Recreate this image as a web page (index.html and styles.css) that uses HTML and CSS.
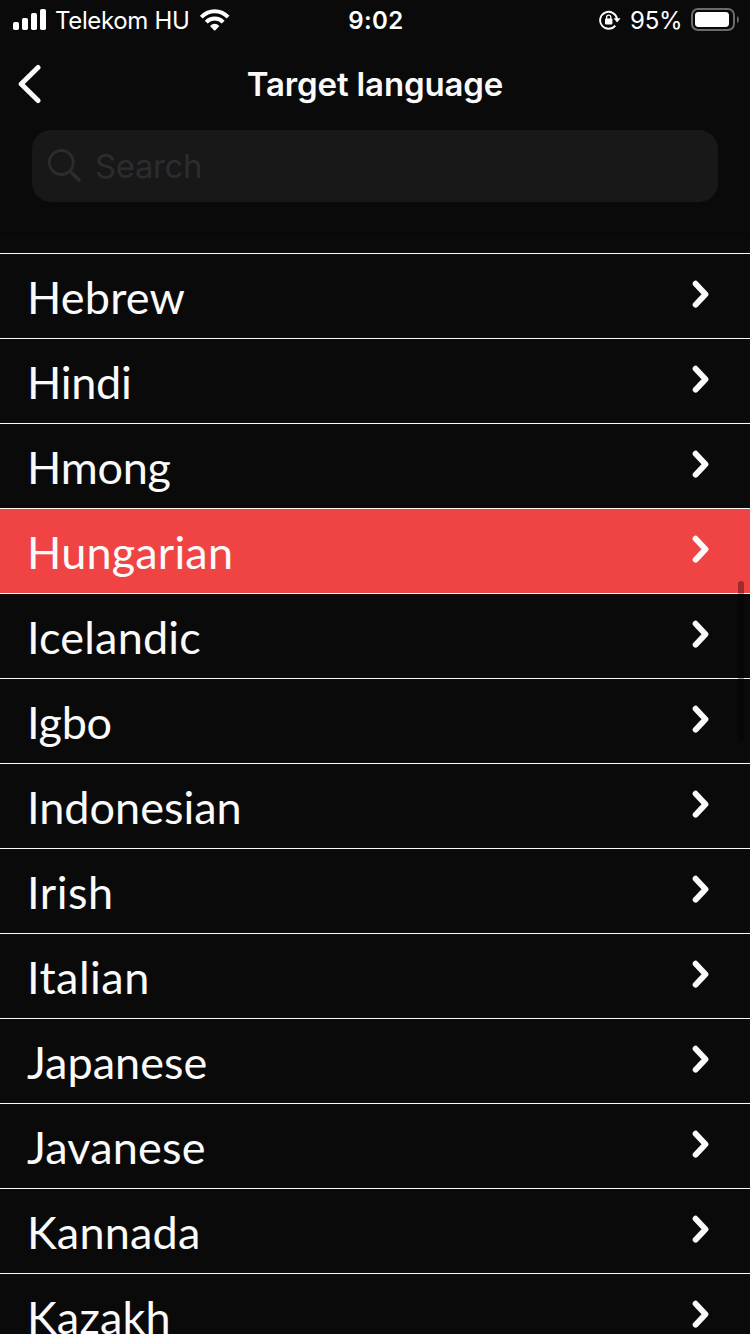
FILE: index.html
```html
<!DOCTYPE html>
<html lang="en">
<head>
<meta charset="utf-8">
<title>Target language</title>
<link rel="stylesheet" href="styles.css">
</head>
<body>
<svg class="defs" width="0" height="0"><symbol id="chevron" viewBox="0 0 20 30"><path d="M4.6 3.7 L14.5 14.2 L4.6 24.7" fill="none" stroke="#fafafa" stroke-width="5.8" stroke-linecap="round" stroke-linejoin="round"/></symbol></svg>
<header class="header">
  <div class="status">
    <div class="status-left">
      <svg class="signal" width="34" height="22" viewBox="0 0 34 22" fill="#fff"><rect x="0" y="13" width="6" height="8" rx="1.7"/><rect x="9" y="9" width="6" height="12" rx="1.7"/><rect x="18" y="4" width="6" height="17" rx="1.7"/><rect x="27" y="0" width="6" height="21" rx="1.7"/></svg>
      <span class="carrier">Telekom HU</span>
      <svg class="wifi" width="30" height="22" viewBox="0 0 30 22"><g fill="none" stroke="#fff" stroke-width="4"><path d="M1.3 8.2 Q7.2 2.3 14.7 2.3 T28.1 8.2"/><path d="M6.2 13.2 Q9.8 9.6 14.7 9.6 T23.2 13.2"/></g><path d="M10 17 Q14.7 12.7 19.4 17 L15.4 21.2 Q14.7 21.8 14 21.2 Z" fill="#fff"/></svg>
    </div>
    <span class="clock">9:02</span>
    <div class="status-right">
      <svg class="lock" width="22" height="20" viewBox="0 0 22 20"><path d="M16.3 15.6 A8.5 8.5 0 1 1 18 8.8" fill="none" stroke="#fff" stroke-width="1.9"/><path d="M14.6 8.2 H21.6 L18.1 12.6 Z" fill="#fff"/><rect x="6" y="8.5" width="7.4" height="6" rx="1" fill="#fff"/><path d="M7.6 9 V7.2 a2.1 2.1 0 0 1 4.2 0 V9" fill="none" stroke="#fff" stroke-width="1.3"/></svg>
      <span class="percent">95%</span>
      <svg class="battery" width="48" height="23" viewBox="0 0 48 23"><rect x="1" y="1" width="42" height="21" rx="6" fill="none" stroke="#6b6b6b" stroke-width="2"/><rect x="4" y="4" width="34" height="15" rx="3.4" fill="#fff"/><path d="M46 8 Q48 9 48 11.5 T46 15 Z" fill="#6b6b6b"/></svg>
    </div>
  </div>
  <div class="nav">
    <svg class="back" width="26" height="40" viewBox="0 0 26 40"><path d="M21 3.5 L4.2 20 L21 36.5" fill="none" stroke="#fafafa" stroke-width="5" stroke-linecap="round" stroke-linejoin="round"/></svg>
    <h1 class="title">Target language</h1>
  </div>
  <div class="search">
    <svg class="glass" width="34" height="34" viewBox="0 0 34 34" fill="none" stroke="#2c2c30" stroke-linecap="round"><circle cx="13.3" cy="13.5" r="12" stroke-width="2.8"/><path d="M22.5 22.7 L31 31" stroke-width="3.6"/></svg>
    <span class="placeholder">Search</span>
  </div>
</header>
<main class="list">
  <div class="row"><span>Hebrew</span><svg class="chevron"><use href="#chevron"/></svg></div>
  <div class="row tight"><span>Hindi</span><svg class="chevron"><use href="#chevron"/></svg></div>
  <div class="row tight"><span>Hmong</span><svg class="chevron"><use href="#chevron"/></svg></div>
  <div class="row selected"><span>Hungarian</span><svg class="chevron"><use href="#chevron"/></svg></div>
  <div class="row"><span>Icelandic</span><svg class="chevron"><use href="#chevron"/></svg></div>
  <div class="row tight"><span>Igbo</span><svg class="chevron"><use href="#chevron"/></svg></div>
  <div class="row even"><span>Indonesian</span><svg class="chevron"><use href="#chevron"/></svg></div>
  <div class="row loose"><span>Irish</span><svg class="chevron"><use href="#chevron"/></svg></div>
  <div class="row loose"><span>Italian</span><svg class="chevron"><use href="#chevron"/></svg></div>
  <div class="row even"><span>Japanese</span><svg class="chevron"><use href="#chevron"/></svg></div>
  <div class="row"><span>Javanese</span><svg class="chevron"><use href="#chevron"/></svg></div>
  <div class="row"><span>Kannada</span><svg class="chevron"><use href="#chevron"/></svg></div>
  <div class="row"><span>Kazakh</span><svg class="chevron"><use href="#chevron"/></svg></div>
</main>
<div class="scrollbar"></div>
</body>
</html>
```
FILE: styles.css
```css
* { box-sizing: border-box; }
body {
  position: relative;
  display: flex;
  flex-direction: column;
  width: 750px;
  height: 1334px;
  margin: 0;
  overflow: hidden;
  background: #0a0a0a;
  color: #fafafa;
  font-family: Inter, "Liberation Sans", sans-serif;
}
svg { display: block; flex: none; }
.defs { position: absolute; }
.header { flex: none; height: 233px; border-bottom: 1px solid #070707; }
.status {
  display: grid;
  grid-template-columns: 1fr auto 1fr;
  height: 40px;
  padding: 0 11px 0 13px;
  color: #fff;
  font-size: 24px;
  line-height: 42px;
  white-space: nowrap;
}
.status-left, .status-right { display: flex; align-items: flex-start; }
.status-right { justify-content: flex-end; }
.signal { margin-top: 9px; }
.carrier { margin-left: 8px; width: 134px; letter-spacing: -0.35px; }
.wifi { margin: 9px 0 0 11px; }
.clock { font-weight: 600; letter-spacing: 0.4px; }
.lock { margin: 10px 9px 0 0; }
.percent { width: 52px; letter-spacing: -0.2px; }
.battery { margin: 8px 0 0 9px; }
.nav {
  display: grid;
  grid-template-columns: 60px 1fr 60px;
  align-items: center;
  height: 90px;
}
.back { margin: 0 0 2px 17px; }
.title {
  margin: 0 0 2px;
  font-size: 33px;
  line-height: 40px;
  font-weight: 600;
  letter-spacing: -0.15px;
  text-align: center;
  white-space: nowrap;
}
.search {
  display: flex;
  align-items: center;
  height: 72px;
  margin: 0 32px;
  padding-left: 16px;
  border-radius: 19px;
  background: #181818;
}
.placeholder { margin-left: 13px; color: #2c2c30; font-size: 33px; letter-spacing: -0.4px; }
.list { margin-top: 20px; }
.row {
  display: flex;
  align-items: center;
  justify-content: space-between;
  height: 85px;
  padding: 2px 39px 0 27px;
  border-top: 1px solid #fafafa;
  font-family: Lato, sans-serif;
  font-size: 45px;
  line-height: 54px;
  letter-spacing: 0.18px;
}
.tight { letter-spacing: -0.3px; }
.even { letter-spacing: 0; }
.loose { letter-spacing: 0.5px; }
.selected { background: #f04444; }
.chevron { width: 20px; height: 30px; margin-bottom: 4px; }
.scrollbar {
  position: absolute;
  top: 581px;
  left: 738px;
  width: 6px;
  height: 160px;
  border-radius: 3px;
  background: rgba(0, 0, 0, 0.35);
}
```
